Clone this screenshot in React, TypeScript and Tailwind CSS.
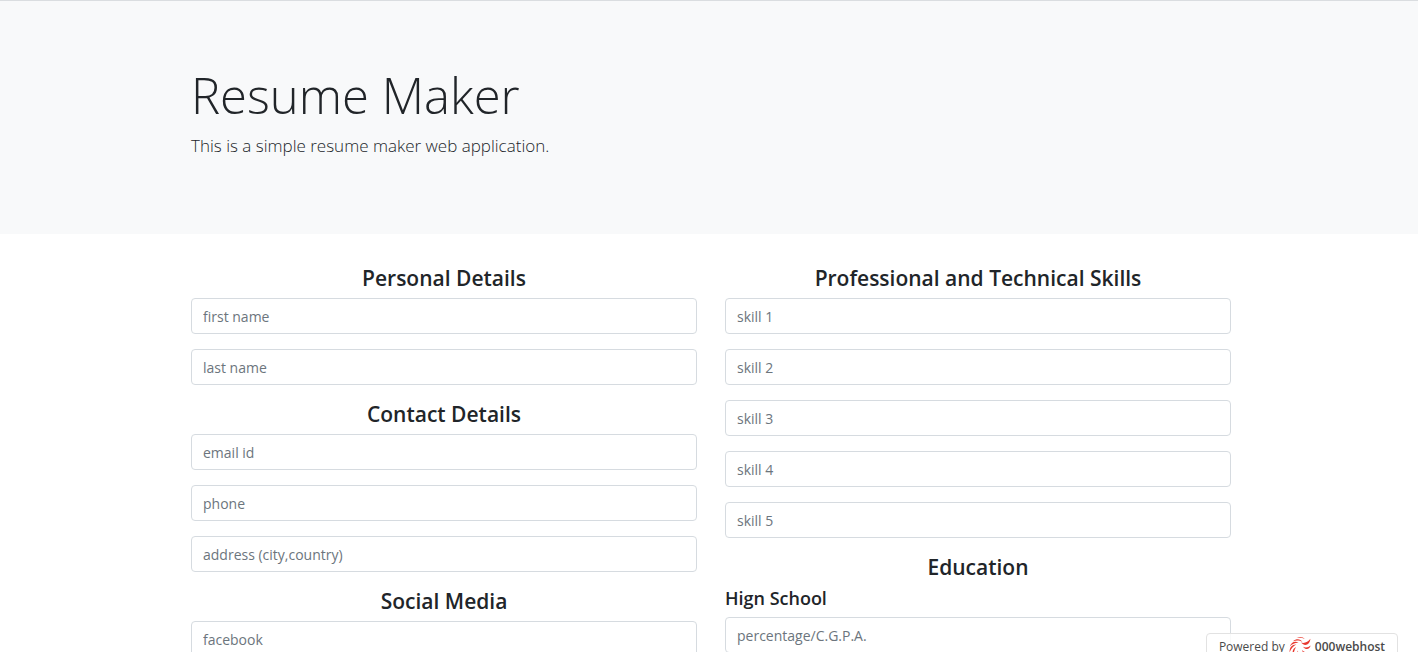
import React from "react";

function Field({ label }: { label: string }) {
  return (
    <input
      type="text"
      aria-label={label}
      placeholder={label}
      className="mb-[15px] block h-9 w-full rounded border border-[#d6dbe0] bg-white px-[11px] text-sm text-[#495057] placeholder:text-[#6c757d] placeholder:opacity-100"
    />
  );
}

function SectionTitle({ children }: { children: React.ReactNode }) {
  return <h2 className="mb-[6px] text-center text-[21px] font-semibold leading-7">{children}</h2>;
}

function Section({ title, fields }: { title: string; fields: string[] }) {
  return (
    <section>
      <SectionTitle>{title}</SectionTitle>
      {fields.map((f) => (
        <Field key={f} label={f} />
      ))}
    </section>
  );
}

function HostLogo() {
  return (
    <svg viewBox="0 0 22 22" className="size-[22px]" fill="#e8392f" aria-hidden="true">
      <path d="M7.5 2C10.5 .2 14 .6 15.8 3C13.5 1.7 10.5 1.6 7.5 2Z" />
      <path d="M4 5.2C7.5 2.4 11.5 2.8 13.2 6C10.6 4.2 7.4 4.2 4 5.2Z" />
      <path d="M.8 10.5C2.4 6 6 4.6 9.6 6.8C6.2 6.6 3.3 7.8.8 10.5Z" />
      <path d="M.6 16.5C.4 11.6 3 8.4 7.4 8.6C4.2 10.2 2 12.6.6 16.5Z" />
      <path d="M4.6 20.5C2.6 16.6 3.6 12.6 7 11C5.2 14 4.6 16.8 4.6 20.5Z" />
      <path d="M12 6.6C15.6 7.6 19 6.2 21.4 2.8C21 8.4 16 11.2 12 6.6Z" />
      <path d="M14 10.8C16.5 12.2 19.5 11.6 21.6 9.6C20.8 13.4 16.8 14.6 14 10.8Z" />
      <path d="M13 14C14.8 16 17.2 16.8 20 16C17.6 19 13.8 18 13 14Z" />
      <path d="M8.6 14.4C9.4 17.4 11.4 19.4 14.6 20.6C10.6 21.4 7.8 18.4 8.6 14.4Z" />
    </svg>
  );
}

export default function App() {
  return (
    <div className="relative h-screen overflow-hidden bg-white font-['Open_Sans','Noto_Sans',sans-serif] text-[#212529]">
      <header className="border-t border-[#dadde0] bg-[#f8f9fa] pt-[62px] pb-[74px]">
        <div className="mx-auto w-full max-w-[1068px] pr-3 pl-4">
          <h1 className="text-[49px] font-light leading-[64px]">Resume Maker</h1>
          <p className="mt-1 text-[17px] font-light leading-[29px]">This is a simple resume maker web application.</p>
        </div>
      </header>
      <main className="mx-auto grid w-full max-w-[1068px] grid-cols-2 gap-7 pt-[30px] pr-3 pl-4">
        <div>
          <Section title="Personal Details" fields={["first name", "last name"]} />
          <Section title="Contact Details" fields={["email id", "phone", "address (city,country)"]} />
          <Section title="Social Media" fields={["facebook"]} />
        </div>
        <div>
          <Section title="Professional and Technical Skills" fields={["skill 1", "skill 2", "skill 3", "skill 4", "skill 5"]} />
          <section>
            <SectionTitle>Education</SectionTitle>
            <h3 className="mb-2 text-lg font-semibold leading-[22px]">Hign School</h3>
            <Field label="percentage/C.G.P.A." />
          </section>
        </div>
      </main>
      <a
        href="#"
        className="absolute right-5 -bottom-[9px] flex h-7 w-48 items-center justify-center rounded border border-[#e2e2e2] bg-white/85 text-xs text-[#4a4a4a]"
      >
        <span className="mr-1">Powered by</span>
        <HostLogo />
        <span className="ml-1 font-semibold">000webhost</span>
      </a>
    </div>
  );
}
